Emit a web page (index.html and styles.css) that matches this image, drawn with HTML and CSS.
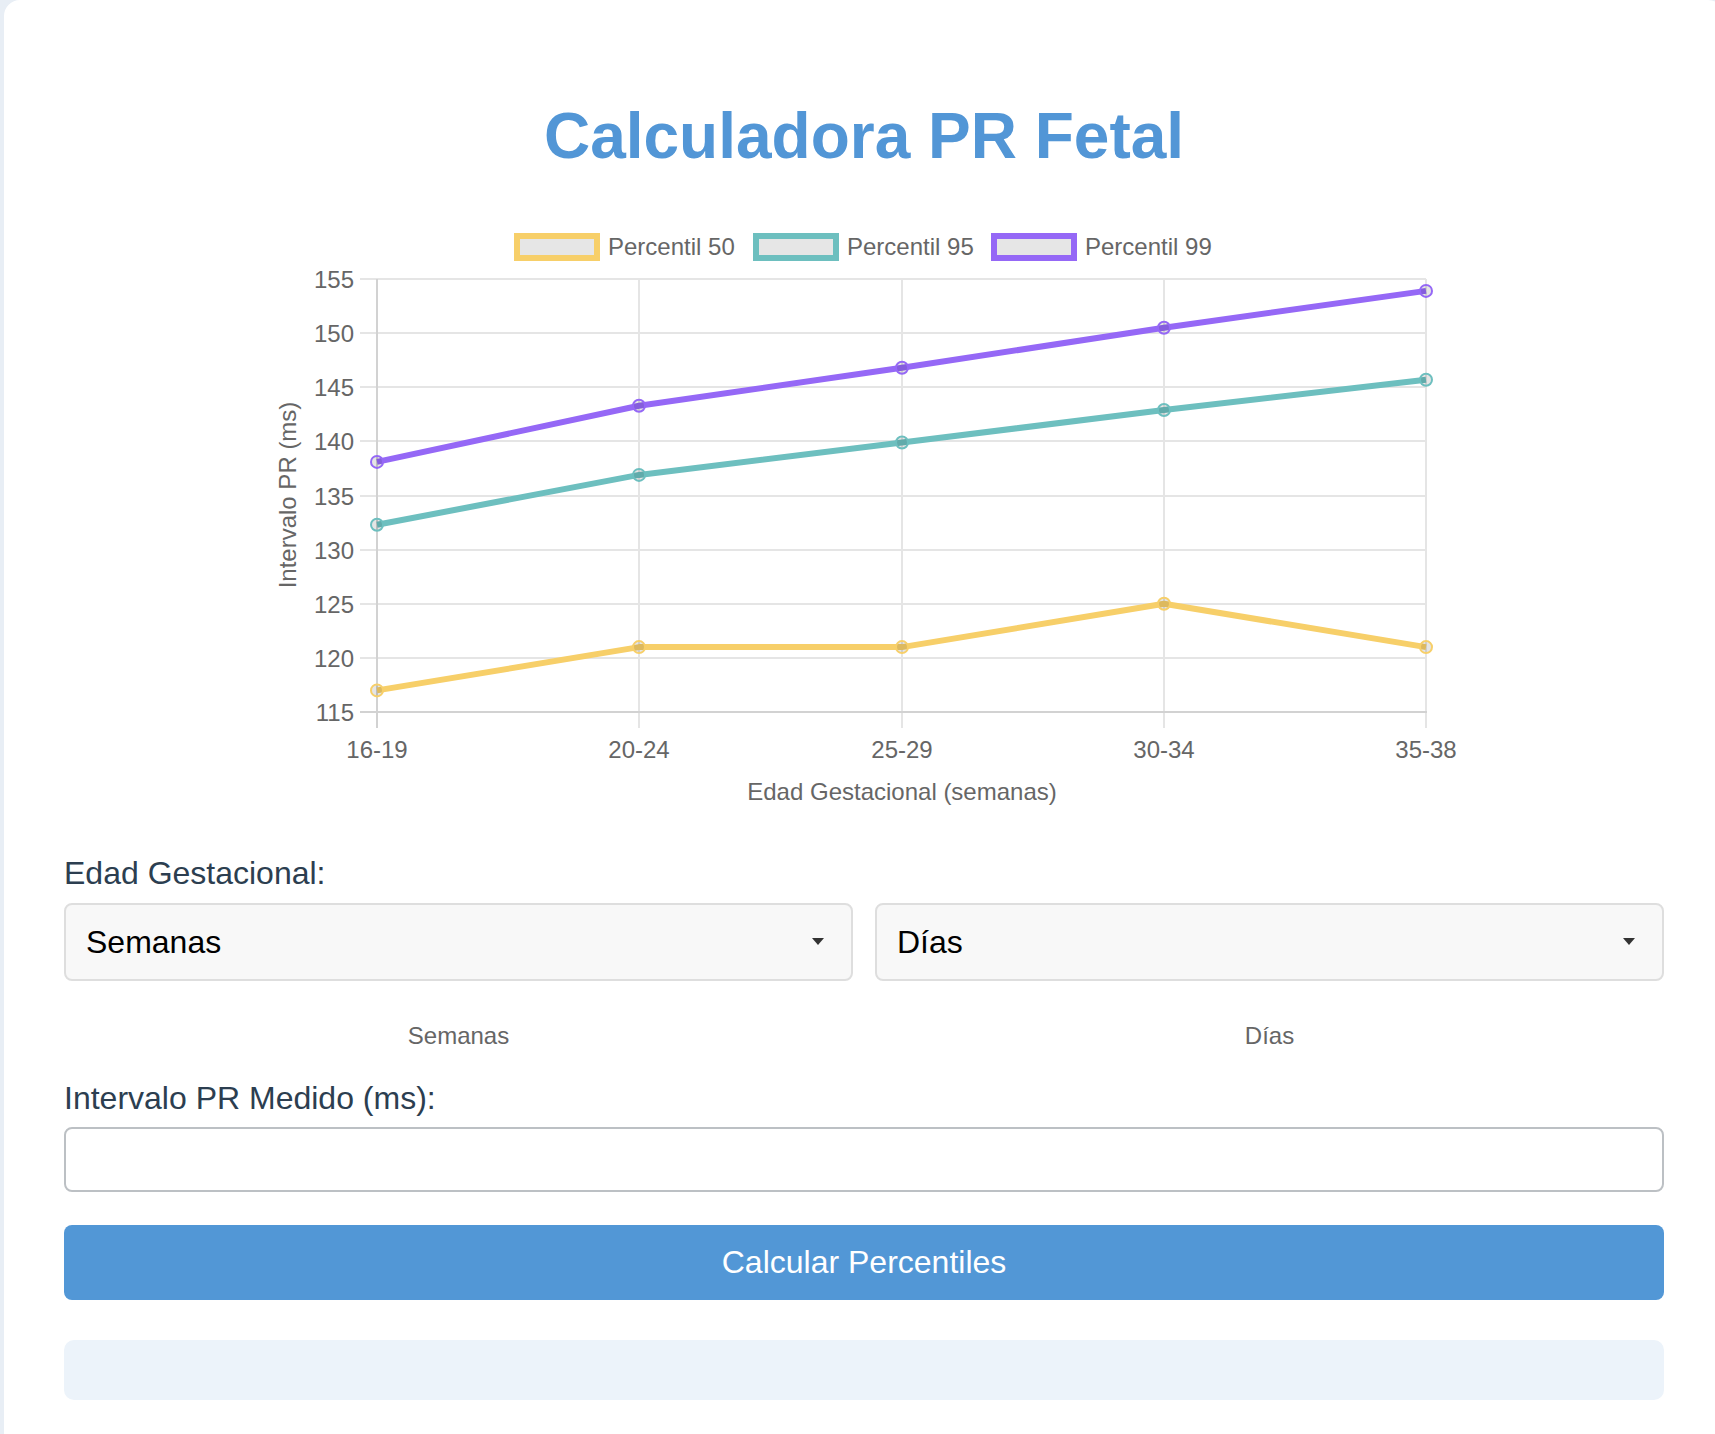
FILE: index.html
```html
<!DOCTYPE html>
<html lang="es">
<head>
<meta charset="utf-8">
<title>Calculadora PR Fetal</title>
<link rel="stylesheet" href="styles.css">
</head>
<body>
<div class="card">
  <h1 class="title">Calculadora PR Fetal</h1>

  <svg class="chart" width="1200" height="610" viewBox="0 0 1200 610">
    <!-- legend -->
    <g class="legend">
      <rect class="lg-box lg-p50" x="253" y="36" width="80" height="22"/>
      <text class="txt" x="344" y="55">Percentil 50</text>
      <rect class="lg-box lg-p95" x="492" y="36" width="80" height="22"/>
      <text class="txt" x="583" y="55">Percentil 95</text>
      <rect class="lg-box lg-p99" x="730" y="36" width="80" height="22"/>
      <text class="txt" x="821" y="55">Percentil 99</text>
    </g>

    <!-- grid -->
    <g class="grid">
      <line x1="96" y1="79" x2="1162" y2="79"/>
      <line x1="96" y1="133" x2="1162" y2="133"/>
      <line x1="96" y1="187" x2="1162" y2="187"/>
      <line x1="96" y1="241" x2="1162" y2="241"/>
      <line x1="96" y1="296" x2="1162" y2="296"/>
      <line x1="96" y1="350" x2="1162" y2="350"/>
      <line x1="96" y1="404" x2="1162" y2="404"/>
      <line x1="96" y1="458" x2="1162" y2="458"/>
      <line x1="375" y1="79" x2="375" y2="528"/>
      <line x1="638" y1="79" x2="638" y2="528"/>
      <line x1="900" y1="79" x2="900" y2="528"/>
      <line x1="1162" y1="79" x2="1162" y2="528"/>
    </g>
    <g class="axis">
      <line x1="96" y1="512" x2="1163" y2="512"/>
      <line x1="113" y1="79" x2="113" y2="528"/>
    </g>

    <!-- y tick labels -->
    <g class="txt ticks-y">
      <text x="90" y="87.5">155</text>
      <text x="90" y="141.5">150</text>
      <text x="90" y="195.5">145</text>
      <text x="90" y="249.5">140</text>
      <text x="90" y="304.5">135</text>
      <text x="90" y="358.5">130</text>
      <text x="90" y="412.5">125</text>
      <text x="90" y="466.5">120</text>
      <text x="90" y="520.5">115</text>
    </g>

    <!-- x tick labels -->
    <g class="txt ticks-x">
      <text x="113" y="557.5">16-19</text>
      <text x="375" y="557.5">20-24</text>
      <text x="638" y="557.5">25-29</text>
      <text x="900" y="557.5">30-34</text>
      <text x="1162" y="557.5">35-38</text>
    </g>

    <text class="txt axis-title" x="638" y="599.5">Edad Gestacional (semanas)</text>
    <text class="txt axis-title" transform="translate(31.5,295) rotate(-90)">Intervalo PR (ms)</text>

    <!-- series -->
    <polyline class="series s-p50" points="113,490.4 375,447.1 638,447.1 900,403.8 1162,447.1"/>
    <polyline class="series s-p95" points="113,324.7 375,274.9 638,242.5 900,210 1162,179.7"/>
    <polyline class="series s-p99" points="113,261.9 375,205.7 638,167.8 900,127.7 1162,90.9"/>

    <g class="pts pts-p50">
      <circle cx="113" cy="490.4" r="6"/>
      <circle cx="375" cy="447.1" r="6"/>
      <circle cx="638" cy="447.1" r="6"/>
      <circle cx="900" cy="403.8" r="6"/>
      <circle cx="1162" cy="447.1" r="6"/>
    </g>
    <g class="pts pts-p95">
      <circle cx="113" cy="324.7" r="6"/>
      <circle cx="375" cy="274.9" r="6"/>
      <circle cx="638" cy="242.5" r="6"/>
      <circle cx="900" cy="210" r="6"/>
      <circle cx="1162" cy="179.7" r="6"/>
    </g>
    <g class="pts pts-p99">
      <circle cx="113" cy="261.9" r="6"/>
      <circle cx="375" cy="205.7" r="6"/>
      <circle cx="638" cy="167.8" r="6"/>
      <circle cx="900" cy="127.7" r="6"/>
      <circle cx="1162" cy="90.9" r="6"/>
    </g>
  </svg>

  <form class="form">
    <label class="label label-age">Edad Gestacional:</label>
    <div class="age-row">
      <div class="age-col">
        <div class="select-wrap">
          <select class="select" aria-label="Semanas">
            <option>Semanas</option>
          </select>
        </div>
        <div class="hint">Semanas</div>
      </div>
      <div class="age-col">
        <div class="select-wrap">
          <select class="select" aria-label="Días">
            <option>Días</option>
          </select>
        </div>
        <div class="hint">Días</div>
      </div>
    </div>

    <label class="label label-pr" for="pr">Intervalo PR Medido (ms):</label>
    <input class="input" id="pr" type="text">

    <button class="btn" type="button">Calcular Percentiles</button>

    <div class="result"></div>
  </form>
</div>
</body>
</html>
```

FILE: styles.css
```css
* {
  box-sizing: border-box;
}

html,
body {
  margin: 0;
  overflow: hidden;
}

body {
  background: #e8eef5;
  font-family: "Liberation Sans", Arial, sans-serif;
}

.card {
  margin-left: 4px;
  width: 1720px;
  min-height: 1434px;
  background: #fff;
  border-radius: 16px 16px 0 0;
  padding: 99px 60px 40px;
}

.title {
  margin: 0;
  font-size: 64px;
  line-height: 74px;
  font-weight: 700;
  color: #5296d6;
  text-align: center;
}

/* chart */
.chart {
  display: block;
  margin: 27px auto 0;
}

.txt {
  font-family: "Liberation Sans", Arial, sans-serif;
  font-size: 24px;
  fill: #666;
}

.ticks-y text {
  text-anchor: end;
}

.ticks-x text,
.axis-title {
  text-anchor: middle;
}

.lg-box {
  fill: #e6e6e6;
  stroke-width: 6;
}

.lg-p50 { stroke: #f7cf69; }
.lg-p95 { stroke: #6dbfbf; }
.lg-p99 { stroke: #9568f6; }

.grid line {
  stroke: #e5e5e5;
  stroke-width: 2;
}

.axis line {
  stroke: #d2d2d2;
  stroke-width: 2;
}

.series {
  fill: none;
  stroke-width: 6;
  stroke-linejoin: round;
}

.s-p50 { stroke: #f7cf69; }
.s-p95 { stroke: #6dbfbf; }
.s-p99 { stroke: #9568f6; }

.pts circle {
  fill: rgba(0, 0, 0, 0.1);
  stroke-width: 2;
}

.pts-p50 circle { stroke: #f7cf69; }
.pts-p95 circle { stroke: #6dbfbf; }
.pts-p99 circle { stroke: #9568f6; }

/* form */
.form {
  margin: 0;
}

.label {
  display: block;
  font-size: 32px;
  line-height: 37px;
  color: #2c3e50;
}

.label-age {
  margin-top: 45px;
}

.age-row {
  display: grid;
  grid-template-columns: 1fr 1fr;
  column-gap: 22px;
  margin-top: 11px;
}

.select-wrap {
  position: relative;
}

.select-wrap::after {
  content: "";
  position: absolute;
  right: 29px;
  top: 35px;
  border-left: 6px solid transparent;
  border-right: 6px solid transparent;
  border-top: 7px solid #333;
  pointer-events: none;
}

.select {
  -webkit-appearance: none;
  appearance: none;
  display: block;
  width: 100%;
  height: 78px;
  margin: 0;
  padding: 0 50px 0 20px;
  font-family: "Liberation Sans", Arial, sans-serif;
  font-size: 32px;
  color: #000;
  background: #f8f8f8;
  border: 2px solid #dedede;
  border-radius: 8px;
}

.hint {
  margin-top: 41px;
  font-size: 24px;
  line-height: 28px;
  color: #666;
  text-align: center;
}

.label-pr {
  margin-top: 30px;
}

.input {
  display: block;
  width: 100%;
  height: 65px;
  margin: 10px 0 0;
  padding: 0 20px;
  font-family: "Liberation Sans", Arial, sans-serif;
  font-size: 32px;
  background: #fff;
  border: 2px solid #bcc0c4;
  border-radius: 8px;
}

.btn {
  display: block;
  width: 100%;
  height: 75px;
  margin-top: 33px;
  border: 0;
  border-radius: 8px;
  background: #5297d6;
  color: #fff;
  font-family: "Liberation Sans", Arial, sans-serif;
  font-size: 32px;
}

.result {
  margin-top: 40px;
  height: 60px;
  border-radius: 10px;
  background: #ecf3fa;
}
```
